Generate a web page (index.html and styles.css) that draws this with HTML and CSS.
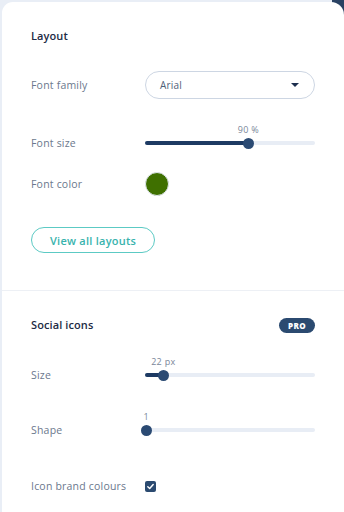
FILE: index.html
```html
<!DOCTYPE html>
<html lang="en">
<head>
    <meta charset="UTF-8">
    <meta name="viewport" content="width=device-width, initial-scale=1.0">
    <title>Layout settings</title>
    <link rel="stylesheet" href="styles.css">
</head>
<body>
    <div class="corner"></div>
    <div class="panel">
        <section class="section">
            <h2 class="title">Layout</h2>

            <div class="row row-select">
                <span class="label">Font family</span>
                <div class="select">
                    <span>Arial</span>
                    <span class="caret"></span>
                </div>
            </div>

            <div class="row row-slider">
                <span class="label">Font size</span>
                <div class="slider">
                    <div class="track"><div class="fill" style="width: 60.5%"></div></div>
                    <div class="thumb" style="left: 60.5%"><span class="value">90 %</span></div>
                </div>
            </div>

            <div class="row row-color">
                <span class="label">Font color</span>
                <span class="swatch"></span>
            </div>

            <button class="outline-btn">View all layouts</button>
        </section>

        <section class="section section-social">
            <div class="title-row">
                <h2 class="title">Social icons</h2>
                <span class="pro">PRO</span>
            </div>

            <div class="row row-slider">
                <span class="label">Size</span>
                <div class="slider">
                    <div class="track"><div class="fill" style="width: 10.5%"></div></div>
                    <div class="thumb" style="left: 10.5%"><span class="value">22 px</span></div>
                </div>
            </div>

            <div class="row row-slider">
                <span class="label">Shape</span>
                <div class="slider">
                    <div class="track"><div class="fill" style="width: 0.5%"></div></div>
                    <div class="thumb" style="left: 0.5%"><span class="value">1</span></div>
                </div>
            </div>

            <div class="row row-check">
                <span class="label">Icon brand colours</span>
                <span class="check">
                    <svg width="9" height="9" viewBox="0 0 10 10"><path d="M2 5.3 L4.1 7.3 L8 2.8" fill="none" stroke="#fff" stroke-width="1.6" stroke-linecap="round" stroke-linejoin="round"/></svg>
                </span>
            </div>
        </section>
    </div>
</body>
</html>
```

FILE: styles.css
```css
body {
    margin: 0;
    background-color: #e9eef6;
    font-family: "Open Sans", "Noto Sans", sans-serif;
    height: 512px;
    overflow: hidden;
    position: relative;
}
.corner {
    position: absolute;
    top: 0;
    right: 0;
    width: 12px;
    height: 16px;
    background-color: #2a4263;
}
.panel {
    position: relative;
    margin: 2px 0 0 2px;
    background-color: #fff;
    border-radius: 11px 13px 0 0;
    height: 510px;
}
.section {
    padding: 26px 29px 37px 29px;
    border-bottom: 1px solid #edf0f5;
}
.section-social {
    border-bottom: none;
    padding-top: 26px;
}
.title {
    margin: 0;
    font-size: 11px;
    line-height: 16px;
    font-weight: 600;
    letter-spacing: 0.1px;
    color: #1d2b45;
}
.title-row {
    display: flex;
    justify-content: space-between;
    align-items: center;
    height: 16px;
}
.pro {
    background-color: #2b4a70;
    color: #fff;
    font-size: 8px;
    font-weight: 800;
    letter-spacing: 0.4px;
    line-height: 15px;
    padding: 0 9px;
    border-radius: 8px;
}
.row {
    display: flex;
    align-items: center;
}
.label {
    width: 114px;
    flex-shrink: 0;
    font-size: 10.5px;
    letter-spacing: 0.2px;
    color: #6b788d;
}
.row-select {
    height: 28px;
    margin-top: 27px;
}
.select {
    flex: 1;
    height: 26px;
    border: 1px solid #cdd6e3;
    border-radius: 14px;
    display: flex;
    align-items: center;
    justify-content: space-between;
    padding: 0 15px 0 14px;
    font-size: 10px;
    letter-spacing: 0.2px;
    color: #4f5f78;
}
.caret {
    width: 0;
    height: 0;
    border-left: 4px solid transparent;
    border-right: 4px solid transparent;
    border-top: 4px solid #1d2e4e;
}
.row-slider {
    height: 28px;
    margin-top: 30px;
}
.section-social .row-slider {
    margin-top: 28px;
}
.section-social .row-slider + .row-slider {
    margin-top: 27px;
}
.slider {
    flex: 1;
    position: relative;
    height: 11px;
    display: flex;
    align-items: center;
}
.track {
    width: 100%;
    height: 4px;
    border-radius: 2px;
    background-color: #e8edf5;
}
.fill {
    height: 100%;
    border-radius: 2px;
    background-color: #1d3a63;
}
.thumb {
    position: absolute;
    top: 0;
    width: 11px;
    height: 11px;
    margin-left: -5px;
    border-radius: 50%;
    background-color: #2b4a73;
}
.value {
    position: absolute;
    bottom: 13px;
    left: 50%;
    transform: translateX(-50%);
    font-size: 9px;
    letter-spacing: 0.3px;
    color: #7a8699;
    white-space: nowrap;
}
.row-color {
    height: 24px;
    margin-top: 15px;
}
.swatch {
    width: 22px;
    height: 22px;
    border-radius: 50%;
    background-color: #3f7000;
    border: 1px solid #dfe5ee;
}
.outline-btn {
    display: block;
    margin-top: 31px;
    height: 26px;
    padding: 0 18px;
    border: 1px solid #5ccac4;
    border-radius: 13px;
    background: #fff;
    color: #39b3ad;
    font-family: inherit;
    font-size: 11px;
    font-weight: 600;
    letter-spacing: 0.25px;
}
.row-check {
    height: 28px;
    margin-top: 28px;
}
.check {
    width: 11px;
    height: 11px;
    border-radius: 2px;
    background-color: #2b4a70;
    display: flex;
    align-items: center;
    justify-content: center;
}
```
